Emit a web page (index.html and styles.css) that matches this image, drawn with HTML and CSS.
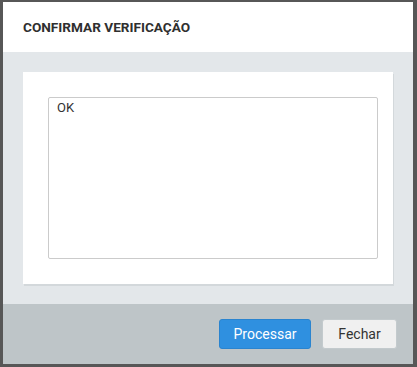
FILE: index.html
```html
<!DOCTYPE html>
<html lang="pt-BR">
<head>
    <meta charset="UTF-8">
    <meta name="viewport" content="width=device-width, initial-scale=1.0">
    <title>Confirmar verificação</title>
    <link rel="stylesheet" href="styles.css">
</head>
<body>
    <div class="modal">
        <div class="modal-header">
            <h4 class="modal-title">CONFIRMAR VERIFICAÇÃO</h4>
        </div>
        <div class="modal-body">
            <div class="card">
                <textarea class="result" readonly>OK</textarea>
            </div>
        </div>
        <div class="modal-footer">
            <button class="btn btn-primary">Processar</button>
            <button class="btn btn-default">Fechar</button>
        </div>
    </div>
</body>
</html>
```

FILE: styles.css
```css
html, body {
    height: 100%;
}

body {
    margin: 0;
    padding: 2px 4px 3px 3px;
    box-sizing: border-box;
    background-color: #575757;
    font-family: Roboto, "Liberation Sans", Arial, sans-serif;
}

.modal {
    width: 410px;
    height: 362px;
    display: flex;
    flex-direction: column;
    background-color: #e3e7ea;
}

.modal-header {
    height: 50px;
    display: flex;
    align-items: center;
    padding: 0 20px;
    background-color: #fff;
}

.modal-title {
    margin: 0;
    font-size: 13.6px;
    font-weight: 700;
    color: #2f2f2f;
}

.modal-body {
    flex: 1;
    padding: 20px;
}

.card {
    height: 212px;
    box-sizing: border-box;
    padding: 25px 15px 25px 25px;
    background-color: #fff;
    box-shadow: 1px 2px 0 #d3d8db;
}

.result {
    display: block;
    width: 100%;
    height: 100%;
    box-sizing: border-box;
    margin: 0;
    padding: 2px 8px;
    border: 1px solid #cbcbcb;
    border-radius: 2px;
    resize: none;
    font-family: Roboto, "Liberation Sans", Arial, sans-serif;
    font-size: 13px;
    color: #333;
    outline: none;
}

.modal-footer {
    height: 60px;
    box-sizing: border-box;
    display: flex;
    justify-content: flex-end;
    align-items: flex-start;
    gap: 11px;
    padding: 15px 16px 0 0;
    background-color: #bec5c8;
}

.btn {
    height: 30px;
    box-sizing: border-box;
    border-radius: 3px;
    font-family: Roboto, "Liberation Sans", Arial, sans-serif;
    font-size: 14px;
    cursor: pointer;
}

.btn-primary {
    width: 92px;
    border: 1px solid #2a84cf;
    background-color: #2f90e0;
    color: #fff;
}

.btn-default {
    width: 75px;
    border: 1px solid #c3cacd;
    background-color: #f0f0f0;
    color: #333;
}
```
